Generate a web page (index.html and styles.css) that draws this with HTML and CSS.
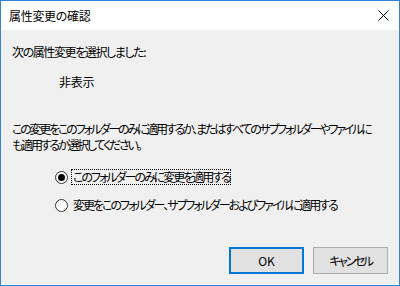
FILE: index.html
```html
<!DOCTYPE html>
<html lang="ja">
<head>
<meta charset="utf-8">
<link rel="stylesheet" href="styles.css">
</head>
<body>
<div class="window">
  <div class="titlebar">
    <span class="title">属性変更の確認</span>
    <svg class="close" width="11" height="11" viewBox="0 0 11 11"><path d="M0.5 0.5 L10.5 10.5 M10.5 0.5 L0.5 10.5" stroke="#000" stroke-width="1" fill="none"/></svg>
  </div>
  <div class="content">
    <p class="line">次の属性変更を選択しました:</p>
    <p class="line attr">非表示</p>
    <p class="para">この変更をこのフォルダーのみに適用するか、またはすべてのサブフォルダーやファイルに<br>も適用するか選択してください。</p>
    <div class="radio-row first">
      <span class="radio checked"></span>
      <span class="label focus">このフォルダーのみに変更を適用する</span>
    </div>
    <div class="radio-row second">
      <span class="radio"></span>
      <span class="label">変更をこのフォルダー、サブフォルダーおよびファイルに適用する</span>
    </div>
    <div class="buttons">
      <button class="btn default">OK</button>
      <button class="btn">キャンセル</button>
    </div>
  </div>
</div>
</body>
</html>
```

FILE: styles.css
```css
html, body {
  margin: 0;
  padding: 0;
}
body {
  font-family: "Noto Sans CJK JP", "Noto Sans", sans-serif;
  font-size: 12px;
  color: #000;
  font-feature-settings: "palt";
}
.window {
  width: 400px;
  height: 286px;
  box-sizing: border-box;
  border: 1px solid #2f86d6;
  display: flex;
  flex-direction: column;
  background: #f0f0f0;
}
.titlebar {
  height: 29px;
  background: #fff;
  display: flex;
  align-items: center;
  justify-content: space-between;
  padding-left: 8px;
  padding-right: 10px;
  flex: none;
}
.title {
  font-size: 12px;
  line-height: 16px;
  letter-spacing: -0.3px;
}
.close {
  display: block;
}
.content {
  flex: 1;
  display: flex;
  flex-direction: column;
  padding: 14px 11px 11px 11px;
  letter-spacing: -2px;
}
.line {
  margin: 0;
  line-height: 16px;
  white-space: nowrap;
}
.line:first-child {
  letter-spacing: -1.4px;
}
.attr {
  margin-top: 14px;
  margin-left: 47px;
  letter-spacing: -0.2px;
}
.para {
  margin: 31px 0 0 0;
  line-height: 16px;
  white-space: nowrap;
  letter-spacing: -2.2px;
}
.radio-row {
  display: flex;
  align-items: center;
  margin-left: 43px;
  height: 16px;
  white-space: nowrap;
}
.radio-row.first {
  margin-top: 16px;
}
.radio-row.second {
  margin-top: 12px;
}
.radio {
  width: 11px;
  height: 11px;
  border: 1px solid #333;
  border-radius: 50%;
  background: #fff;
  box-sizing: content-box;
  display: flex;
  align-items: center;
  justify-content: center;
  flex: none;
  margin-right: 3px;
}
.radio.checked::after {
  content: "";
  width: 7px;
  height: 7px;
  border-radius: 50%;
  background: #000;
}
.label {
  line-height: 14px;
  border: 1px solid transparent;
  padding: 0 0 0 1px;
}
.label.focus {
  border: 1px dotted #000;
}
.buttons {
  margin-top: auto;
  display: flex;
  justify-content: flex-end;
  gap: 9px;
  letter-spacing: 0;
}
.btn {
  width: 75px;
  height: 27px;
  box-sizing: border-box;
  background: #e1e1e1;
  border: 1px solid #adadad;
  font-family: "Noto Sans CJK JP", "Noto Sans", sans-serif;
  font-feature-settings: "palt";
  font-size: 12px;
  color: #000;
  padding: 0;
  margin: 0;
  letter-spacing: -2.4px;
}
.btn.default {
  border: 2px solid #0078d7;
  letter-spacing: 0;
}
```
